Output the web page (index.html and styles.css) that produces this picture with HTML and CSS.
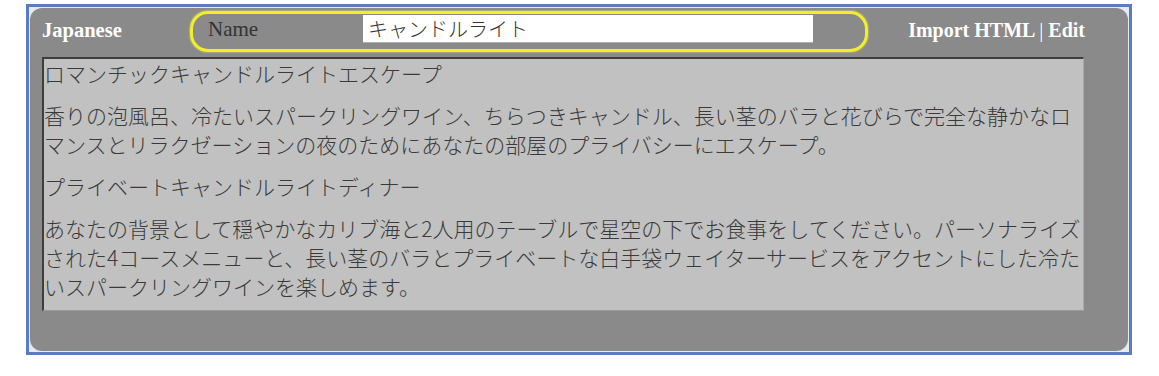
FILE: index.html
```html
<!DOCTYPE html>
<html lang="ja">
<head>
<meta charset="utf-8">
<title>Japanese</title>
<link rel="stylesheet" href="styles.css">
</head>
<body>
<div class="frame">
  <div class="panel">
    <div class="header">
      <div class="lang">Japanese</div>
      <div class="namebox">
        <span class="name-label">Name</span>
        <input class="name-input" type="text" value="キャンドルライト">
      </div>
      <div class="links">Import HTML <span class="sep">|</span> Edit</div>
    </div>
    <div class="content">
      <p>ロマンチックキャンドルライトエスケープ</p>
      <p>香りの泡風呂、冷たいスパークリングワイン、ちらつきキャンドル、長い茎のバラと花びらで完全な静かなロマンスとリラクゼーションの夜のためにあなたの部屋のプライバシーにエスケープ。</p>
      <p>プライベートキャンドルライトディナー</p>
      <p>あなたの背景として穏やかなカリブ海と2人用のテーブルで星空の下でお食事をしてください。パーソナライズされた4コースメニューと、長い茎のバラとプライベートな白手袋ウェイターサービスをアクセントにした冷たいスパークリングワインを楽しめます。</p>
    </div>
  </div>
</div>
</body>
</html>
```

FILE: styles.css
```css
html, body {
  margin: 0;
  padding: 0;
  background: #ffffff;
}

.frame {
  margin: 4px 0 0 26px;
  width: 1098px;
  border: 3px solid #5a7dbf;
  padding: 1px;
  background: #e4eaf3;
}

.panel {
  background: #8a8a8a;
  border-radius: 12px;
  padding: 3px 43px 40px 12px;
}

.header {
  display: grid;
  grid-template-columns: 148px 678px 1fr;
  align-items: center;
  height: 41px;
  margin-bottom: 5px;
}

.lang {
  font-family: "Liberation Serif", serif;
  font-weight: bold;
  font-size: 20.5px;
  color: #ffffff;
  padding-bottom: 2px;
}

.namebox {
  box-sizing: border-box;
  height: 41px;
  border: 3px solid #f2ee2c;
  border-radius: 18px;
  box-shadow: 0 0 2px #f8f66a;
  display: flex;
  align-items: flex-start;
  padding: 1px 0 0 15px;
}

.name-label {
  width: 155px;
  font-family: "Liberation Serif", serif;
  font-size: 21px;
  line-height: 28px;
  color: #333333;
}

.name-input {
  box-sizing: border-box;
  width: 450px;
  height: 28px;
  border: none;
  border-bottom: 1px solid #b0b0b0;
  margin: 0;
  padding: 0 5px;
  background: #ffffff;
  font-family: "Noto Sans CJK JP", sans-serif;
  font-weight: 300;
  font-size: 20px;
  color: #333333;
  outline: none;
}

.links {
  text-align: right;
  font-family: "Liberation Serif", serif;
  font-weight: bold;
  font-size: 20px;
  color: #ffffff;
  padding-bottom: 2px;
}

.sep {
  font-weight: normal;
}

.content {
  box-sizing: border-box;
  width: 1042px;
  height: 254px;
  background: #c1c1c1;
  border-top: 2px solid #3e3e3e;
  border-left: 2px solid #3e3e3e;
  border-right: 1px solid #a9a9a9;
  border-bottom: 1px solid #9a9a9a;
  padding: 0;
  overflow: hidden;
}

.content p {
  margin: 0 0 13px;
  font-family: "Noto Sans CJK JP", sans-serif;
  font-weight: 300;
  font-size: 21px;
  line-height: 29px;
  color: #3a3a3a;
}
```
